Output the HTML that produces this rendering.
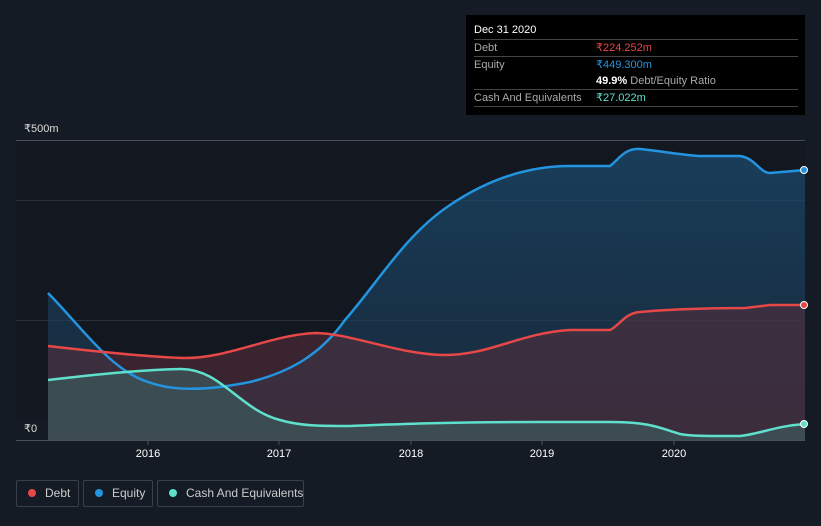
<!DOCTYPE html>
<html><head><style>
body{margin:0;background:#151b24;width:821px;height:526px;overflow:hidden;font-family:"Liberation Sans",sans-serif;}
.tt{position:absolute;left:466px;top:15px;width:339px;height:100px;background:#000;color:#fff;font-size:11px;}
.row{position:absolute;left:8px;width:324px;border-top:1px solid #444;height:17px;line-height:17px;color:#aaa}
.v{position:absolute;left:122px}
.leg{position:absolute;top:480px;height:27px;border:1px solid #3a4049;border-radius:2px;color:#ccc;font-size:12px;line-height:25px;box-sizing:border-box;white-space:nowrap}
.dot{position:absolute;left:11px;top:8px;width:8px;height:8px;border-radius:50%}
</style></head><body>
<svg width="821" height="526" style="position:absolute;left:0;top:0">
<defs>
<linearGradient id="eg" x1="0" y1="0" x2="0" y2="1"><stop offset="0" stop-color="#1b4a6e" stop-opacity=".75"/><stop offset="1" stop-color="#1b3a55" stop-opacity=".5"/></linearGradient>
</defs>
<rect x="16" y="140" width="789" height="300" fill="#131820"/>
<line x1="16" y1="140.5" x2="805" y2="140.5" stroke="#4a4f56"/>
<line x1="16" y1="200.5" x2="805" y2="200.5" stroke="#2b3038"/>
<line x1="16" y1="320.5" x2="805" y2="320.5" stroke="#2b3038"/>
<path d="M48,293 C80,325 110,370 148,382 C170,390 200,392 250,382 C290,372 320,355 345,320 C380,280 405,235 450,205 C490,178 530,166 570,166 L610,166 C620,158 625,148 640,149 C660,151 690,156 700,156 L740,156 C755,158 760,173 770,173 L805,170 L805,440 L48,440Z" fill="url(#eg)"/>
<path d="M48,346 C100,352 148,357 185,358 C230,358 270,335 315,333 C350,333 400,355 445,355 C490,355 520,333 570,330 L610,330 C620,325 625,313 640,312 C660,310 700,308 745,308 L770,305 L805,305 L805,440 L48,440Z" fill="#5a2f3c" fill-opacity=".55"/>
<path d="M48,380 C100,374 140,370 180,369 C220,368 240,410 280,420 C300,426 320,426 350,426 C400,424 450,422 540,422 L610,422 C650,422 660,428 680,434 C690,436 700,436 740,436 C760,434 775,426 805,424 L805,440 L48,440Z" fill="#3d5a5c" fill-opacity=".7"/>
<path d="M48,293 C80,325 110,370 148,382 C170,390 200,392 250,382 C290,372 320,355 345,320 C380,280 405,235 450,205 C490,178 530,166 570,166 L610,166 C620,158 625,148 640,149 C660,151 690,156 700,156 L740,156 C755,158 760,173 770,173 L805,170" fill="none" stroke="#2394df" stroke-width="2.5"/>
<path d="M48,346 C100,352 148,357 185,358 C230,358 270,335 315,333 C350,333 400,355 445,355 C490,355 520,333 570,330 L610,330 C620,325 625,313 640,312 C660,310 700,308 745,308 L770,305 L805,305" fill="none" stroke="#e64848" stroke-width="2.5"/>
<path d="M48,380 C100,374 140,370 180,369 C220,368 240,410 280,420 C300,426 320,426 350,426 C400,424 450,422 540,422 L610,422 C650,422 660,428 680,434 C690,436 700,436 740,436 C760,434 775,426 805,424" fill="none" stroke="#5fe0cc" stroke-width="2.5"/>
<circle cx="804" cy="170" r="3.5" fill="#2394df" stroke="#fff"/>
<circle cx="804" cy="305" r="3.5" fill="#e64848" stroke="#fff"/>
<circle cx="804" cy="424" r="3.5" fill="#5fe0cc" stroke="#fff"/>
<rect x="16" y="420" width="32" height="20" fill="#151b24"/>
<line x1="16" y1="440.5" x2="805" y2="440.5" stroke="#4a4f56"/>
<g stroke="#4a4f56"><line x1="148" y1="440" x2="148" y2="445"/><line x1="279" y1="440" x2="279" y2="445"/><line x1="411" y1="440" x2="411" y2="445"/><line x1="542" y1="440" x2="542" y2="445"/><line x1="674" y1="440" x2="674" y2="445"/></g>
<g fill="#fff" font-size="11" text-anchor="middle" font-family="Liberation Sans"><text x="148" y="457">2016</text><text x="279" y="457">2017</text><text x="411" y="457">2018</text><text x="542" y="457">2019</text><text x="674" y="457">2020</text></g>
<g fill="#ddd" font-size="11" font-family="Liberation Sans"><text x="24" y="132">₹500m</text><text x="24" y="432">₹0</text></g>
</svg>
<div class="tt">
<div style="position:absolute;left:8px;top:9px">Dec 31 2020</div>
<div class="row" style="top:24px">Debt<span class="v" style="color:#e64848">₹224.252m</span></div>
<div class="row" style="top:41px">Equity<span class="v" style="color:#2394df">₹449.300m</span></div>
<div class="row" style="top:58px;border:none"><span class="v"><b style="color:#fff">49.9%</b> Debt/Equity Ratio</span></div>
<div class="row" style="top:74px">Cash And Equivalents<span class="v" style="color:#5fe0cc">₹27.022m</span></div>
<div class="row" style="top:91px;height:0"></div>
</div>
<div class="leg" style="left:16px;width:63px"><span class="dot" style="background:#e64848"></span><span style="margin-left:28px">Debt</span></div>
<div class="leg" style="left:83px;width:70px"><span class="dot" style="background:#2394df"></span><span style="margin-left:28px">Equity</span></div>
<div class="leg" style="left:157px;width:147px"><span class="dot" style="background:#5fe0cc"></span><span style="margin-left:28px">Cash And Equivalents</span></div>
</body></html>
